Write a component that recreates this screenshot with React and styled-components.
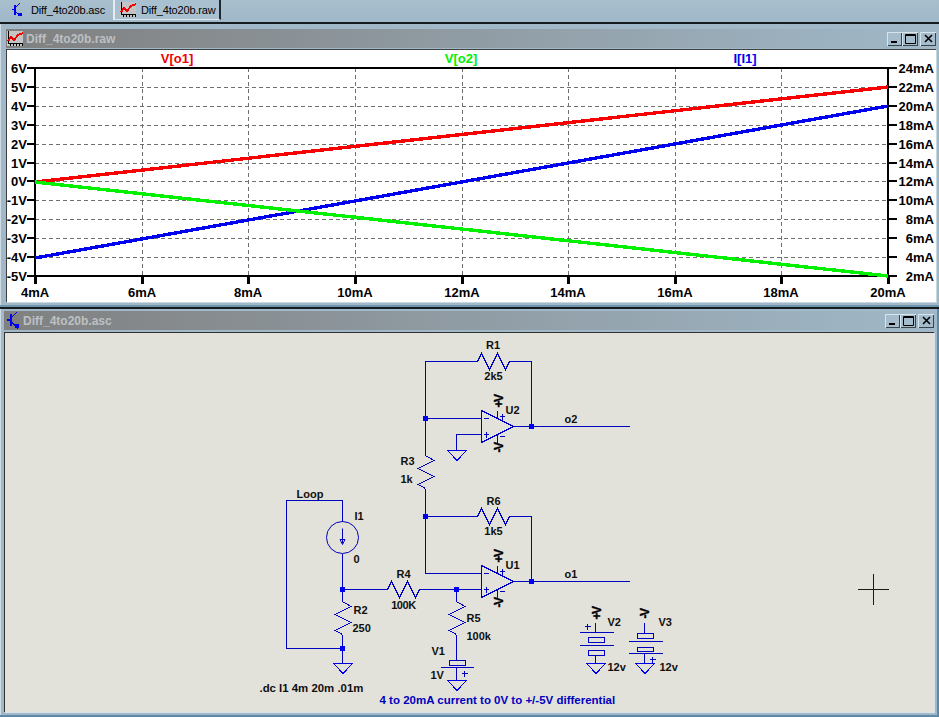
import React from 'react'
import styled, { createGlobalStyle } from 'styled-components';

const GlobalStyle = createGlobalStyle`
  html, body {
    margin:0;
    padding:0;
    background:#a0b8c8;
    overflow:hidden;
  }
`;

const Page = styled.div`
  width:939px;
  height:717px;
  display:flex;
  flex-direction:column;
  background:#a0b8c8;
  font-family:"Liberation Sans", Arial, sans-serif;
  overflow:hidden;
`;

const TabBar = styled.div`
  height:22px;
  flex:none;
  display:flex;
  align-items:flex-start;
  background:linear-gradient(180deg,#a8bfce,#9fb7c7);
`;

const Tab = styled.div`
  height:${({$active})=>$active ? '19px' : '20px'};
  width:${({$w})=>$w}px;
  box-sizing:border-box;
  display:flex;
  align-items:center;
  gap:${({$active})=>$active ? '8px' : '5px'};
  padding-left:${({$active})=>$active ? '11px' : '5px'};
  font-size:11px;
  letter-spacing:-0.15px;
  color:#000;
  background:${({$active})=>$active ? 'transparent' : '#a9c0d0'};
  border-right:${({$active})=>$active ? 'none' : '2px solid #20282c'};
  border-left:${({$active})=>$active ? 'none' : '2px solid #e4ecf0'};
  border-bottom:${({$active})=>$active ? 'none' : '1px solid #dce6ec'};
`;

const Window = styled.div`
  flex:none;
  height:${({$h})=>$h}px;
  box-sizing:border-box;
  padding:${({$pad})=>$pad};
  display:flex;
  flex-direction:column;
  border-top:2px solid #141c20;
  box-shadow:${({$framed})=>$framed
    ? 'inset -2px -2px 0 #5e8aa8, inset 1px 0 0 #d0dce4'
    : 'inset 0 -2px 0 #6f96ae, inset 1px 0 0 #d0dce4'};
`;

const TitleBar = styled.div`
  height:19px;
  flex:none;
  display:flex;
  align-items:center;
  padding:0 ${({$right})=>$right}px 0 ${({$left})=>$left}px;
  background:linear-gradient(90deg,#808080,#a0b8c8);
  color:#bcc0c4;
  font-size:12px;
  font-weight:700;
  gap:3px;
`;

const TitleText = styled.span`
  flex:1;
`;

const WinButtons = styled.div`
  display:flex;
  align-items:center;
`;

const WinButton = styled.div`
  width:${({$w})=>$w || 16}px;
  height:14px;
  margin-left:${({$gap})=>$gap || 0}px;
  display:flex;
  align-items:center;
  justify-content:center;
  background:#a4bccc;
  box-shadow:inset 1px 1px 0 #d8e4ec, inset -1px -1px 0 #38444c;
`;

const PlotBody = styled.div`
  flex:none;
  height:253px;
  margin-top:1px;
  background:#fff;
  box-shadow:inset 1px 1px 0 #404040, 1px 1px 0 #c8d8e0;
`;

const SchematicBody = styled.div`
  flex:none;
  height:380px;
  margin-top:2px;
  background:#e3e2da;
  box-shadow:inset 1px 1px 0 #303030, 1px 1px 0 #d8e4ec;
`;

const Canvas = styled.svg`
  display:block;
  font-family:"Liberation Sans", Arial, sans-serif;
`;

const Label = styled.text`
  font-size:${({$size})=>$size || 11}px;
  font-weight:700;
  fill:${({$color})=>$color || '#101010'};
  letter-spacing:${({$track})=>$track || 0}px;
`;

const RailText = styled(Label)`
  stroke:#000;
  stroke-width:0.35px;
`;

const XTICKS = ['4mA','6mA','8mA','10mA','12mA','14mA','16mA','18mA','20mA'];
const LEFT_TICKS = ['6V','5V','4V','3V','2V','1V','0V','-1V','-2V','-3V','-4V','-5V'];
const RIGHT_TICKS = ['24mA','22mA','20mA','18mA','16mA','14mA','12mA','10mA','8mA','6mA','4mA','2mA'];

const PX = 35, PY = 68, PW = 853, PH = 208;
const tickX = i => Math.round(PX + i * PW / 8);
const tickY = i => Math.round(PY + i * PH / 11);

// both drawings use page coordinates, the viewBox takes the body origin away
const PlotChart = () => (
  <Canvas width="930" height="253" viewBox="6 49 930 253">
    <g shapeRendering="crispEdges">
      {LEFT_TICKS.map((t,i)=> i>0 && i<11 && (
        <line key={t} x1={PX} x2={PX+PW} y1={tickY(i)} y2={tickY(i)} stroke="#707070" strokeDasharray="4 3"/>
      ))}
      {XTICKS.map((t,i)=> i>0 && i<8 && (
        <line key={t} x1={tickX(i)} x2={tickX(i)} y1={PY} y2={PY+PH} stroke="#707070" strokeDasharray="4 3"/>
      ))}
      <rect x={PX} y={PY} width={PW} height={PH} fill="none" stroke="#000" strokeWidth="2.6"/>
      {LEFT_TICKS.map((t,i)=>(
        <g key={t}>
          <line x1={PX-8} x2={PX} y1={tickY(i)} y2={tickY(i)} stroke="#000" strokeWidth="2"/>
          <line x1={PX+PW} x2={PX+PW+9} y1={tickY(i)} y2={tickY(i)} stroke="#000" strokeWidth="2"/>
        </g>
      ))}
      {XTICKS.map((t,i)=>(
        <line key={t} x1={tickX(i)} x2={tickX(i)} y1={PY+PH} y2={PY+PH+8} stroke="#000" strokeWidth="3"/>
      ))}
      <line x1="35" y1="258" x2="888" y2="106" stroke="#0000f0" strokeWidth="3.4"/>
      <line x1="35" y1="182" x2="888" y2="87" stroke="#f80000" strokeWidth="3.4"/>
      <line x1="35" y1="182" x2="888" y2="276" stroke="#00f000" strokeWidth="3.4"/>
    </g>
    <Label $size="13" x="177" y="63" textAnchor="middle" $color="#f00000">V[o1]</Label>
    <Label $size="13" x="461" y="63" textAnchor="middle" $color="#00f000">V[o2]</Label>
    <Label $size="13" x="745" y="63" textAnchor="middle" $color="#0000f0">I[I1]</Label>
    {LEFT_TICKS.map((t,i)=>(
      <Label key={t} $size="13" x="27" y={tickY(i)+5} textAnchor="end" $color="#000">{t}</Label>
    ))}
    {RIGHT_TICKS.map((t,i)=>(
      <Label key={t} $size="13" x="934" y={tickY(i)+5} textAnchor="end" $color="#000">{t}</Label>
    ))}
    {XTICKS.map((t,i)=>(
      <Label key={t} $size="13" x={tickX(i)} y="297" textAnchor="middle" $color="#000">{t}</Label>
    ))}
  </Canvas>
);

const resV = (x,y) => [[0,0],[8.5,5],[-7.5,13],[8.5,21],[-7.5,29],[0,33]].map(([a,b])=>`${x+a},${y+b}`).join(' ');
const resH = (x,y) => [[0,0],[4,-8],[12,8],[20,-8],[28,8],[32,0]].map(([a,b])=>`${x+a},${y+b}`).join(' ');

const WIRE = '#0000c0';

const Wire = ({p}) => <polyline points={p} fill="none" stroke={WIRE} strokeWidth="1"/>;
const Dot = ({x,y}) => <rect x={x-2.5} y={y-2.5} width="5" height="5" fill="#0000f0"/>;
const Ground = ({x,y}) => <polygon points={`${x-9.5},${y} ${x+9.5},${y} ${x},${y+10}`} fill="none" stroke="#0000f0" strokeWidth="1"/>;

const OpAmp = ({y}) => (
  <g>
    <polygon points={`482,${y-16} 514,${y} 482,${y+16}`} fill="none" stroke={WIRE}/>
    <Wire p={`498,${y-8} 498,${y-16}`}/>
    <Wire p={`498,${y+8} 498,${y+16}`}/>
    <Wire p={`484,${y-8} 489,${y-8}`}/>
    <Wire p={`484,${y+8} 489,${y+8}`}/>
    <Wire p={`486.5,${y+5} 486.5,${y+11}`}/>
    <Wire p={`500,${y-10} 505,${y-10}`}/>
    <Wire p={`502.5,${y-13} 502.5,${y-7}`}/>
    <Wire p={`500,${y+10} 505,${y+10}`}/>
  </g>
);

const Rail = ({x,y,text}) => (
  <RailText $size="12" $track="-1.4" $color="#000" transform={`translate(${x+4.5},${y}) rotate(-90)`}>{text}</RailText>
);

const SchematicDrawing = () => (
  <Canvas width="930" height="380" viewBox="4.5 332.5 930 380">
    <g shapeRendering="crispEdges" transform="translate(0 1)">
      <Wire p="478,361 426,361 426,455"/>
      <Wire p="510,361 532,361 532,426"/>
      <Wire p="426,418 482,418"/>
      <Wire p="514,426 630,426"/>
      <Wire p="482,434 457,434 457,450"/>
      <Ground x={457.5} y={450}/>
      <Wire p="426,488 426,573 482,573"/>
      <Wire p="426,516 478,516"/>
      <Wire p="510,516 532,516 532,581"/>
      <Wire p="514,581 630,581"/>
      <Wire p="343,521 343,500 287,500 287,648 343,648"/>
      <Wire p="343,553 343,601"/>
      <Wire p="343,634 343,663"/>
      <Ground x={343.5} y={663}/>
      <Wire p="343,589 388,589"/>
      <Wire p="420,589 482,589"/>
      <Wire p="457,589 457,601"/>
      <Wire p="457,634 457,659"/>
      <rect x="449.5" y="659.5" width="16" height="5" fill="none" stroke={WIRE}/>
      <Wire p="441,667 474,667"/>
      <Wire p="457,667 457,680"/>
      <Ground x={457.5} y={680}/>
      <Wire p="462,673 468,673"/>
      <Wire p="465,670 465,676"/>

      <Wire p="596,622 596,632"/>
      <Wire p="580,632 614,632"/>
      <rect x="588.5" y="636.5" width="16" height="5" fill="none" stroke={WIRE}/>
      <Wire p="580,645 614,645"/>
      <rect x="588.5" y="649.5" width="16" height="5" fill="none" stroke={WIRE}/>
      <Wire p="596,654 596,663"/>
      <Ground x={596.5} y={663}/>
      <Wire p="585,626 591,626"/>
      <Wire p="588,623 588,629"/>

      <Wire p="645,622 645,632"/>
      <rect x="637.5" y="632.5" width="16" height="5" fill="none" stroke={WIRE}/>
      <Wire p="629,641 663,641"/>
      <rect x="637.5" y="646.5" width="16" height="4" fill="none" stroke={WIRE}/>
      <Wire p="629,653 663,653"/>
      <Wire p="645,653 645,663"/>
      <Ground x={645.5} y={663}/>
      <Wire p="650,659 656,659"/>
      <Wire p="653,656 653,662"/>

      <OpAmp y={426}/>
      <OpAmp y={581}/>

      <polyline points={resH(478,361)} fill="none" stroke={WIRE}/>
      <polyline points={resH(478,516)} fill="none" stroke={WIRE}/>
      <polyline points={resH(388,589)} fill="none" stroke={WIRE}/>
      <polyline points={resV(426,455)} fill="none" stroke={WIRE}/>
      <polyline points={resV(343,601)} fill="none" stroke={WIRE}/>
      <polyline points={resV(457,601)} fill="none" stroke={WIRE}/>

      <Dot x={426} y={418}/>
      <Dot x={532} y={426}/>
      <Dot x={426} y={516}/>
      <Dot x={532} y={581}/>
      <Dot x={343} y={589}/>
      <Dot x={457} y={589}/>
      <Dot x={343} y={648}/>
    </g>

    <circle cx="343" cy="538" r="16" fill="none" stroke={WIRE}/>
    <polyline points="343,529 343,544" fill="none" stroke={WIRE}/>
    <polygon points="340.5,540 345.5,540 343,545" fill="none" stroke={WIRE}/>

    <g shapeRendering="crispEdges">
      <line x1="858" x2="889" y1="590" y2="590" stroke="#1a1a1a"/>
      <line x1="874" x2="874" y1="574" y2="605" stroke="#1a1a1a"/>
    </g>

    <Label x="493.5" y="349" textAnchor="middle">R1</Label>
    <Label x="494" y="380" textAnchor="middle">2k5</Label>
    <Label x="506" y="414">U2</Label>
    <Label x="565" y="423">o2</Label>
    <Label x="401" y="465">R3</Label>
    <Label x="401" y="483">1k</Label>
    <Label x="494" y="505" textAnchor="middle">R6</Label>
    <Label x="494" y="535" textAnchor="middle">1k5</Label>
    <Label x="506" y="569">U1</Label>
    <Label x="565" y="578">o1</Label>
    <Label x="297" y="498">Loop</Label>
    <Label x="355" y="520">I1</Label>
    <Label x="354" y="563">0</Label>
    <Label x="354" y="614">R2</Label>
    <Label x="353" y="632">250</Label>
    <Label x="404" y="578" textAnchor="middle">R4</Label>
    <Label x="404" y="609" textAnchor="middle" $track="-0.4">100K</Label>
    <Label x="467" y="622">R5</Label>
    <Label x="467" y="640">100k</Label>
    <Label x="432" y="655">V1</Label>
    <Label x="431" y="679">1V</Label>
    <Label x="608" y="626">V2</Label>
    <Label x="608" y="671">12v</Label>
    <Label x="659" y="626">V3</Label>
    <Label x="660" y="671">12v</Label>
    <Label $size="11.4" x="260" y="692">.dc I1 4m 20m .01m</Label>
    <Label $size="11.5" x="380" y="704" $color="#0000c0">4 to 20mA current to 0V to +/-5V differential</Label>

    <Rail x={499} y={408} text="+V"/>
    <Rail x={499} y={453} text="-V"/>
    <Rail x={499} y={563} text="+V"/>
    <Rail x={499} y={608} text="-V"/>
    <Rail x={597} y={620} text="+V"/>
    <Rail x={645} y={619} text="-V"/>
  </Canvas>
);

const SchematicIcon = ({w=12,h=14}) => (
  <svg width={w} height={h} viewBox="0 0 13 17" shapeRendering="crispEdges">
    <path d="M0 8h4M4 2v12M4 6L10 0M4 10l7 6" stroke="#0000f0" strokeWidth="1.4" fill="none"/>
    <rect x="8" y="12" width="4" height="4" fill="#0000f0"/>
  </svg>
);

const PlotIcon = () => (
  <svg width="16" height="15" viewBox="0 0 16 15" shapeRendering="crispEdges">
    <rect width="16" height="15" fill="#c4c4c4"/>
    <path d="M1 0v13M1 12.5h15M3 13v2M6 13v2M9 13v2M12 13v2M15 13v2" stroke="#000" fill="none"/>
    <path d="M1 10L4 6l3 3 4-5 5-2" stroke="#f00000" strokeWidth="2" fill="none"/>
  </svg>
);

const Buttons = () => (
  <WinButtons>
    <WinButton $w={15}><svg width="7" height="8"><rect y="6" width="6" height="2" fill="#000"/></svg></WinButton>
    <WinButton><svg width="11" height="10"><path d="M.5 9.5v-9h10v9zM0 1.5h11" fill="none" stroke="#000"/></svg></WinButton>
    <WinButton $gap={2}><svg width="9" height="9"><path d="M1 1l7 7M8 1L1 8" stroke="#000" strokeWidth="1.6"/></svg></WinButton>
  </WinButtons>
);

const App = () => {
  return (
    <Page>
      <GlobalStyle/>
      <TabBar>
        <Tab $active $w={113}><SchematicIcon/>Diff_4to20b.asc</Tab>
        <Tab $w={108}><PlotIcon/>Diff_4to20b.raw</Tab>
      </TabBar>
      <Window $h={285} $pad="5px 3px 5px 6px">
        <TitleBar $left={1} $right={0}>
          <PlotIcon/>
          <TitleText>Diff_4to20b.raw</TitleText>
          <Buttons/>
        </TitleBar>
        <PlotBody><PlotChart/></PlotBody>
      </Window>
      <Window $framed $h={410} $pad="2px 5px 5px 4px">
        <TitleBar $left={3} $right={0}>
          <SchematicIcon w={13} h={17}/>
          <TitleText>Diff_4to20b.asc</TitleText>
          <Buttons/>
        </TitleBar>
        <SchematicBody><SchematicDrawing/></SchematicBody>
      </Window>
    </Page>
  )
}

export default App
